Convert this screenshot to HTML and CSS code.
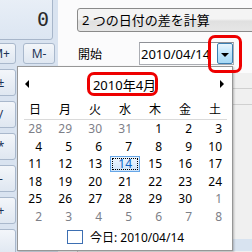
FILE: index.html
```html
<!DOCTYPE html>
<html lang="ja">
<head>
    <meta charset="UTF-8">
    <title>電卓 - 日付の計算</title>
    <link rel="stylesheet" href="styles.css">
</head>
<body>
    <div class="window">
        <div class="calc">
            <div class="display">0</div>
            <div class="keys">
                <div class="col col-a">
                    <div class="key key-m">M+</div>
                    <div class="key">±</div>
                    <div class="key">/</div>
                    <div class="key">*</div>
                    <div class="key">-</div>
                    <div class="key">+</div>
                    <div class="key"></div>
                </div>
                <div class="col col-b">
                    <div class="key key-m">M-</div>
                    <div class="key"></div>
                    <div class="key"></div>
                    <div class="key"></div>
                    <div class="key"></div>
                </div>
            </div>
        </div>

        <div class="datecalc">
            <div class="mode">2 つの日付の差を計算</div>
            <div class="field">
                <span class="label">開始</span>
                <div class="picker">
                    <span class="value">2010/04/14</span>
                    <span class="drop"><span class="caret"></span></span>
                </div>
            </div>
            <div class="result">
                <div class="result-row"></div>
                <div class="result-row"></div>
                <div class="result-fill"></div>
                <div class="result-band"></div>
            </div>
        </div>

        <!-- month calendar dropdown -->
        <div class="popup">
            <div class="cal-head">
                <span class="arrow arrow-left"></span>
                <span class="cal-title">2010年4月</span>
                <span class="arrow arrow-right"></span>
            </div>
            <div class="weekdays">
                <span>日</span><span>月</span><span>火</span><span>水</span><span>木</span><span>金</span><span>土</span>
            </div>
            <div class="rule"></div>
            <div class="days">
                <span class="other">28</span><span class="other">29</span><span class="other">30</span><span class="other">31</span><span>1</span><span>2</span><span>3</span>
                <span>4</span><span>5</span><span>6</span><span>7</span><span>8</span><span>9</span><span>10</span>
                <span>11</span><span>12</span><span>13</span><span class="selected">14</span><span>15</span><span>16</span><span>17</span>
                <span>18</span><span>19</span><span>20</span><span>21</span><span>22</span><span>23</span><span>24</span>
                <span>25</span><span>26</span><span>27</span><span>28</span><span>29</span><span>30</span><span class="other">1</span>
                <span class="other">2</span><span class="other">3</span><span class="other">4</span><span class="other">5</span><span class="other">6</span><span class="other">7</span><span class="other">8</span>
            </div>
            <div class="today">
                <span class="today-box"></span>
                <span class="today-text">今日: 2010/04/14</span>
            </div>
        </div>

        <div class="ring ring-drop"></div>
        <div class="ring ring-title"></div>
    </div>
</body>
</html>
```

FILE: styles.css
```css
body {
    margin: 0;
    font-family: "Noto Sans", "Noto Sans CJK JP", sans-serif;
    background-color: #ffffff;
}
.window {
    position: relative;
    width: 252px;
    height: 252px;
    overflow: hidden;
    display: flex;
}

/* calculator (left, cut off) */
.calc {
    width: 58px;
    flex-shrink: 0;
    background-color: #d9e3f0;
}
.display {
    margin: -4px 0 0 -10px;
    width: 63px;
    height: 44px;
    box-sizing: border-box;
    border: 1px solid #a7b6ca;
    border-radius: 0 0 3px 0;
    background: linear-gradient(#e9eff7, #dce6f2);
    font-family: "DejaVu Sans Mono", monospace;
    font-size: 20px;
    color: #2b2b2b;
    text-align: right;
    padding: 10px 3px 0 0;
}
.keys {
    display: flex;
    gap: 7px;
    margin-top: 3px;
}
.col {
    display: flex;
    flex-direction: column;
    gap: 5px;
}
.col-a {
    width: 30px;
    margin-left: -14px;
}
.col-b {
    width: 32px;
}
.key {
    height: 27px;
    box-sizing: border-box;
    border: 1px solid #a9b8cc;
    border-radius: 3px;
    background: linear-gradient(#f3f6fa, #dfe7f1);
    font-size: 12px;
    color: #1e3456;
    display: flex;
    align-items: center;
    justify-content: center;
}
.key-m {
    height: 21px;
}

/* date calculation panel */
.datecalc {
    flex: 1;
    padding-left: 19px;
    background-color: #fbfbfc;
}
.mode {
    margin-top: 8px;
    margin-right: -20px;
    height: 24px;
    box-sizing: border-box;
    border: 1px solid #8a8a8a;
    border-radius: 3px;
    background: linear-gradient(#f4f4f4 45%, #e0e0e0 55%, #e6e6e6);
    font-size: 13px;
    line-height: 22px;
    padding-left: 4px;
    white-space: nowrap;
    color: #000;
}
.field {
    display: flex;
    align-items: center;
    margin-top: 10px;
    height: 23px;
}
.label {
    width: 61px;
    font-size: 12px;
    padding-left: 1px;
    color: #000;
}
.picker {
    width: 95px;
    height: 23px;
    box-sizing: border-box;
    border: 1px solid #abadb3;
    border-top-color: #8e9096;
    background-color: #fff;
    display: flex;
    align-items: center;
    justify-content: space-between;
}
.value {
    font-size: 13px;
    padding-left: 1px;
    color: #000;
}
.drop {
    width: 16px;
    height: 21px;
    box-sizing: border-box;
    border: 1px solid #3c7fb1;
    border-radius: 2px;
    background: linear-gradient(#eaf6fd, #bee6fd 50%, #a7d9f5);
    display: flex;
    align-items: center;
    justify-content: center;
}
.caret {
    width: 0;
    height: 0;
    border-left: 4px solid transparent;
    border-right: 4px solid transparent;
    border-top: 4px solid #000;
    margin-top: 2px;
}
.result {
    margin-top: 8px;
    margin-right: -20px;
    height: 186px;
    display: flex;
    flex-direction: column;
    border-left: 1px solid #c8c8c8;
    background-color: #f0f0f0;
}
.result-row {
    height: 15px;
    border-bottom: 1px solid #d0d0d0;
}
.result-fill {
    flex: 1;
}
.result-band {
    height: 12px;
    background-color: #d8e3f0;
    margin-bottom: 8px;
}

/* calendar dropdown */
.popup {
    position: absolute;
    left: 17px;
    top: 66px;
    width: 216px;
    height: 185px;
    box-sizing: border-box;
    border: 1px solid #979797;
    background-color: #ffffff;
    box-shadow: 1px 1px 2px rgba(0, 0, 0, 0.25);
}
.cal-head {
    height: 34px;
    display: flex;
    align-items: center;
    justify-content: space-between;
    padding: 0 8px 0 7px;
}
.cal-title {
    font-size: 13px;
    color: #000;
}
.arrow {
    width: 0;
    height: 0;
    border-top: 4px solid transparent;
    border-bottom: 4px solid transparent;
}
.arrow-left {
    border-right: 4px solid #000;
}
.arrow-right {
    border-left: 4px solid #000;
}
.weekdays {
    display: grid;
    grid-template-columns: repeat(7, 30px);
    margin-left: 2px;
    height: 18px;
    font-size: 12px;
    line-height: 18px;
    text-align: center;
    color: #000;
}
.rule {
    height: 1px;
    background-color: #dadada;
    margin: 0 5px 0 6px;
}
.days {
    display: grid;
    grid-template-columns: repeat(7, 30px);
    grid-auto-rows: 17.5px;
    margin-left: 2px;
    font-size: 12px;
    color: #000;
}
.days span {
    text-align: right;
    padding-right: 8px;
    line-height: 17px;
}
.days .other {
    color: #7d8088;
}
.days .selected {
    color: #0b63c5;
    box-sizing: border-box;
    height: 16px;
    margin-top: 1px;
    line-height: 14px;
    padding-right: 7px;
    border: 1px solid #66a7e8;
    background: linear-gradient(#eef6fe, #cfe4fa);
    outline: 1px dotted #000;
    outline-offset: -3px;
}
.today {
    display: flex;
    align-items: center;
    height: 24px;
    padding-left: 49px;
    gap: 7px;
}
.today-box {
    width: 16px;
    height: 14px;
    box-sizing: border-box;
    border: 1px solid #3d6fb2;
}
.today-text {
    font-size: 12px;
    color: #000;
}

/* red annotation rings */
.ring {
    position: absolute;
    box-sizing: border-box;
    border: 3px solid #ee0000;
    border-radius: 7px;
}
.ring-drop {
    left: 208px;
    top: 35px;
    width: 34px;
    height: 38px;
}
.ring-title {
    left: 87px;
    top: 72px;
    width: 71px;
    height: 24px;
}
```
